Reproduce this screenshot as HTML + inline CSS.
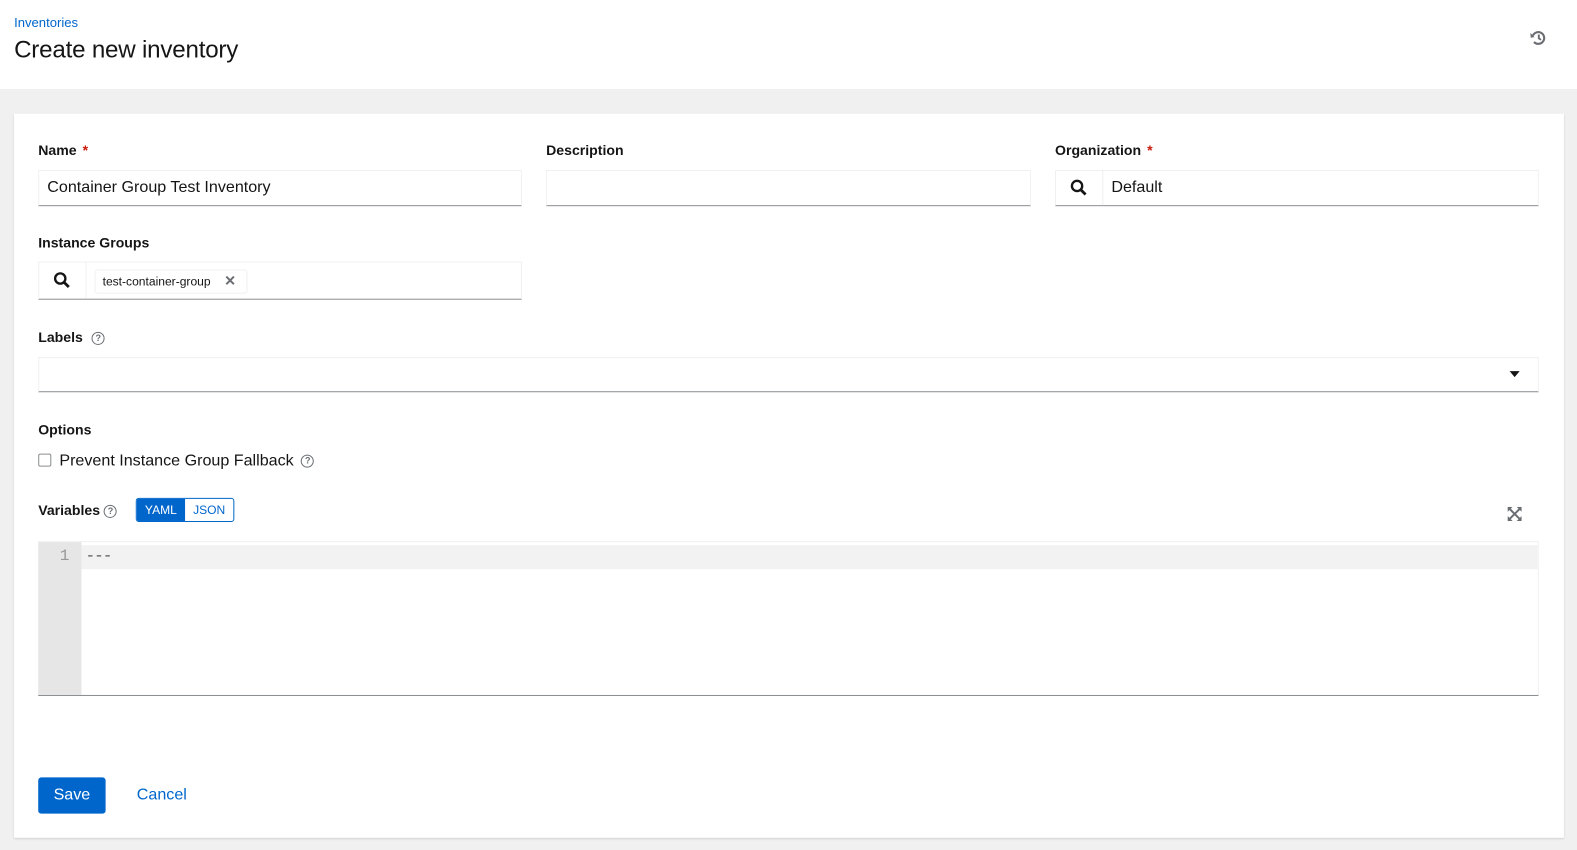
<!DOCTYPE html>
<html><head><meta charset="utf-8"><style>
*{box-sizing:border-box;margin:0;padding:0}
html,body{width:1577px;height:850px;overflow:hidden}
body{background:#f0f0f0;font-family:"Liberation Sans",sans-serif;color:#151515;position:relative}
#w{position:absolute;left:0;top:0;width:1568px;height:846px;transform:scale(1.00574);transform-origin:0 0}
.a{position:absolute}
.hdr{left:0;top:0;width:1577px;height:89px;background:#fff}
.card{left:14px;top:113px;width:1541px;height:720px;background:#fff;box-shadow:0 1px 2px rgba(0,0,0,.12)}
.lbl{font-size:14px;font-weight:bold}
.req{color:#c9190b;margin-left:6px}
.inp{border:1px solid #f0f0f0;border-bottom:1px solid #8a8d90;background:#fff;height:36px;font-size:16px;padding:8px 8px;line-height:18px}
.q{display:inline-block;width:13px;height:13px;border:1.5px solid #6a6e73;border-radius:50%;font-size:9px;text-align:center;line-height:10px;color:#6a6e73;font-weight:bold;vertical-align:middle}
</style></head><body>
<div class="a hdr"></div>
<div id="w">
<div class="a" style="left:14px;top:15px;font-size:13px;color:#06c">Inventories</div>
<div class="a" style="left:14px;top:36px;font-size:24px;letter-spacing:-0.2px">Create new inventory</div>
<svg class="a" style="left:1521px;top:29px" width="17" height="17" viewBox="0 0 16 16"><path d="M3 6 A5.5 5.5 0 1 1 4 12" fill="none" stroke="#6a6e73" stroke-width="2"/><path d="M0.5 3.5 L4.5 7.5 L1 8 Z" fill="#6a6e73"/><path d="M8.5 5v3.5l2 1.5" fill="none" stroke="#6a6e73" stroke-width="1.8"/></svg>
<div class="a card"></div>

<div class="a lbl" style="left:38px;top:141px">Name<span class="req">*</span></div>
<div class="a inp" style="left:38px;top:169px;width:481px">Container Group Test Inventory</div>
<div class="a lbl" style="left:543px;top:141px">Description</div>
<div class="a inp" style="left:543px;top:169px;width:482px"></div>
<div class="a lbl" style="left:1049px;top:141px">Organization<span class="req">*</span></div>
<div class="a inp" style="left:1049px;top:169px;width:481px;padding-left:55px">Default</div>
<div class="a" style="left:1096px;top:170px;width:1px;height:34px;background:#f0f0f0"></div>
<svg class="a" style="left:1064px;top:178px" width="17" height="17" viewBox="0 0 16 16"><circle cx="6.5" cy="6.5" r="4.8" fill="none" stroke="#151515" stroke-width="2.2"/><path d="M10 10l4.5 4.5" stroke="#151515" stroke-width="2.6"/></svg>

<div class="a lbl" style="left:38px;top:233px">Instance Groups</div>
<div class="a inp" style="left:38px;top:260px;width:481px;height:38px"></div>
<div class="a" style="left:85px;top:261px;width:1px;height:36px;background:#f0f0f0"></div>
<svg class="a" style="left:53px;top:270px" width="17" height="17" viewBox="0 0 16 16"><circle cx="6.5" cy="6.5" r="4.8" fill="none" stroke="#151515" stroke-width="2.2"/><path d="M10 10l4.5 4.5" stroke="#151515" stroke-width="2.6"/></svg>
<div class="a" style="left:94px;top:268px;width:152px;height:24px;border:1px solid #f0f0f0;border-radius:3px;font-size:12px;padding:4px 7px;color:#151515">test-container-group<span style="position:absolute;left:128px;top:2px;font-size:14px;color:#6a6e73;font-weight:bold">✕</span></div>

<div class="a lbl" style="left:38px;top:327px">Labels <span class="q" style="margin-left:5px">?</span></div>
<div class="a inp" style="left:38px;top:355px;width:1492px;height:35px"></div>
<div class="a" style="left:1501px;top:369px;border-left:5px solid transparent;border-right:5px solid transparent;border-top:6px solid #151515"></div>

<div class="a lbl" style="left:38px;top:419px">Options</div>
<div class="a" style="left:38px;top:451px;width:13px;height:13px;border:1px solid #8a8d90;border-radius:2px"></div>
<div class="a" style="left:59px;top:450px;font-size:16px">Prevent Instance Group Fallback <span class="q" style="margin-left:3px">?</span></div>

<div class="a lbl" style="left:38px;top:499px">Variables <span class="q">?</span></div>
<div class="a" style="left:135px;top:495px;width:98px;height:24px;border:1px solid #06c;border-radius:3px;font-size:12px;overflow:hidden;display:flex">
<div style="width:48px;background:#06c;color:#fff;text-align:center;line-height:22px">YAML</div>
<div style="flex:1;color:#06c;text-align:center;line-height:22px">JSON</div></div>
<svg class="a" style="left:1499px;top:504px" width="14" height="14" viewBox="0 0 14 14"><path d="M1 1l12 12M13 1L1 13" stroke="#6a6e73" stroke-width="2"/><path d="M0 0h5L0 5zM14 0h-5l5 5zM0 14h5l-5-5zM14 14h-5l5-5z" fill="#6a6e73"/></svg>

<div class="a" style="left:38px;top:538px;width:1492px;height:154px;border-top:1px solid #f0f0f0;border-bottom:1px solid #8a8d90;border-right:1px solid #f0f0f0"></div>
<div class="a" style="left:38px;top:539px;width:43px;height:152px;background:#e6e6e6"></div>
<div class="a" style="left:81px;top:542px;width:1448px;height:24px;background:#f2f2f2"></div>
<div class="a" style="left:38px;top:544px;width:31px;text-align:right;font-size:16px;color:#999;font-family:'Liberation Mono',monospace">1</div>
<div class="a" style="left:85px;top:544px;font-size:16px;color:#555;font-family:'Liberation Mono',monospace;letter-spacing:-1px">---</div>

<div class="a" style="left:38px;top:773px;width:67px;height:36px;background:#06c;color:#fff;border-radius:3px;font-size:16px;text-align:center;line-height:36px">Save</div>
<div class="a" style="left:136px;top:782px;font-size:16px;color:#06c">Cancel</div>
</div>
</body></html>
